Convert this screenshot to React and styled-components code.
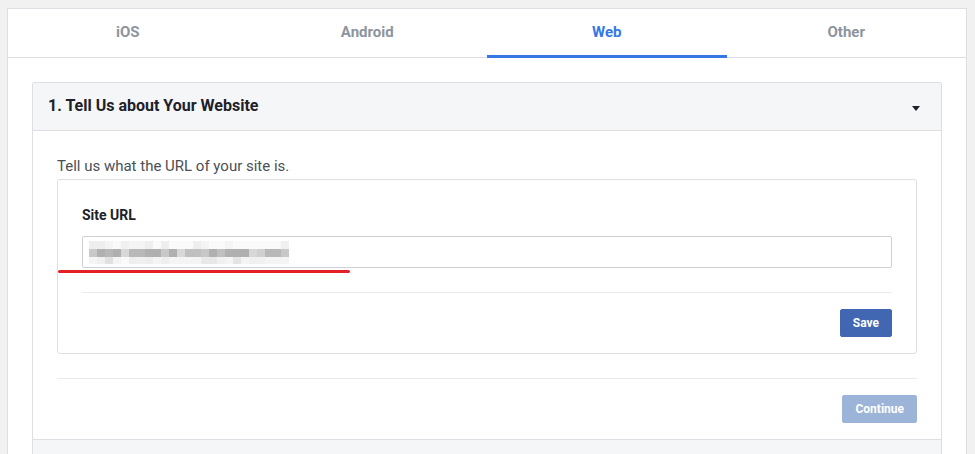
import React from "react";
import styled, { createGlobalStyle } from "styled-components";

const GlobalStyle = createGlobalStyle`
    html, body {
        margin: 0;
        padding: 0;
        background: #f1f1f1;
        font-family: Roboto, "Liberation Sans", Arial, sans-serif;
        overflow: hidden;
    }
    * {
        box-sizing: border-box;
    }
`;

const tabs = ["iOS", "Android", "Web", "Other"];

// pixelated (blurred) url inside the input, one value per 8px block
const midRow = [200, 176, 184, 176, 216, 184, 184, 176, 176, 200, 176, 216, 192, 192, 200, 176, 192, 176, 176, 176, 216, 208, 184, 184, 200];
const topRow = [238, 238, 244, 250, 240, 244, 244, 238, 250, 238, 250, 250, 250, 238, 244, 250, 250, 244, 250, 250, 250, 250, 250, 250, 240];
const lowRow = [244, 240, 224, 244, 250, 238, 240, 238, 244, 238, 244, 244, 244, 244, 232, 232, 240, 244, 228, 244, 240, 240, 244, 244, 244];

const gray = (v) => `rgb(${v},${v},${v})`;

const App = () => {
    return (
        <>
            <GlobalStyle />
            <Page>
                <Card>
                    <TabBar>
                        {tabs.map((tab) => (
                            <Tab key={tab} active={tab === "Web"}>
                                {tab}
                            </Tab>
                        ))}
                    </TabBar>
                    <CardBody>
                        <Panel>
                            <PanelHeader>
                                <PanelTitle>1. Tell Us about Your Website</PanelTitle>
                                <Caret />
                            </PanelHeader>
                            <PanelBody>
                                <Intro>Tell us what the URL of your site is.</Intro>
                                <FormBox>
                                    <FieldLabel>Site URL</FieldLabel>
                                    <UrlInput>
                                        <svg width="200" height="23" viewBox="0 0 200 23">
                                            {topRow.map((v, i) => (
                                                <rect key={`t${i}`} x={i * 8} y="0" width="8" height="8" fill={gray(v)} />
                                            ))}
                                            {midRow.map((v, i) => (
                                                <rect key={`m${i}`} x={i * 8} y="8" width="8" height="8" fill={gray(v)} />
                                            ))}
                                            {lowRow.map((v, i) => (
                                                <rect key={`l${i}`} x={i * 8} y="16" width="8" height="7" fill={gray(v)} />
                                            ))}
                                        </svg>
                                    </UrlInput>
                                    <RedMark />
                                    <Divider />
                                    <ButtonRow>
                                        <Button>Save</Button>
                                    </ButtonRow>
                                </FormBox>
                                <Divider />
                                <ButtonRow>
                                    <Button disabled>Continue</Button>
                                </ButtonRow>
                            </PanelBody>
                            <NextSection />
                        </Panel>
                    </CardBody>
                </Card>
            </Page>
        </>
    );
};

const Page = styled.div`
    padding: 8px 8px 0 7px;
    height: 454px;
`;

const Card = styled.div`
    background: #fff;
    border: 1px solid #dddfe2;
    border-bottom: none;
    height: 100%;
`;

const TabBar = styled.div`
    display: grid;
    grid-template-columns: repeat(4, 1fr);
    border-bottom: 1px solid #dddfe2;
    height: 49px;
`;

const Tab = styled.div`
    display: flex;
    align-items: center;
    justify-content: center;
    font-size: 15px;
    font-weight: 700;
    color: ${(p) => (p.active ? "#3578e5" : "#8d949e")};
    border-bottom: 3px solid ${(p) => (p.active ? "#3578e5" : "transparent")};
    margin-bottom: -1px;
`;

const CardBody = styled.div`
    padding: 24px 24px 0;
`;

const Panel = styled.div`
    border: 1px solid #dddfe2;
    border-bottom: none;
    border-radius: 3px 3px 0 0;
    overflow: hidden;
`;

const PanelHeader = styled.div`
    background: #f5f6f7;
    height: 48px;
    border-bottom: 1px solid #dddfe2;
    display: flex;
    align-items: center;
    justify-content: space-between;
    padding: 0 21px 0 15px;
`;

const PanelTitle = styled.div`
    font-size: 16px;
    font-weight: 700;
    color: #1d2129;
    margin-top: -2px;
`;

const Caret = styled.div`
    width: 0;
    height: 0;
    border-left: 4px solid transparent;
    border-right: 4px solid transparent;
    border-top: 5px solid #1d2129;
    margin-top: 4px;
`;

const PanelBody = styled.div`
    padding: 26px 24px 16px;
`;

const Intro = styled.div`
    font-size: 15px;
    color: #4b4f56;
    line-height: 18px;
    margin-bottom: 4px;
`;

const FormBox = styled.div`
    position: relative;
    border: 1px solid #dddfe2;
    border-radius: 3px;
    padding: 27px 24px 16px;
`;

const FieldLabel = styled.div`
    font-size: 14px;
    font-weight: 700;
    color: #1d2129;
    line-height: 16px;
    margin-bottom: 13px;
`;

const UrlInput = styled.div`
    height: 32px;
    border: 1px solid #ccd0d5;
    border-radius: 2px;
    padding: 4px 6px;
    display: flex;
    align-items: center;
`;

const RedMark = styled.div`
    position: absolute;
    left: 0;
    top: 90px;
    width: 292px;
    height: 3px;
    border-radius: 2px;
    background: #e42127;
`;

const Divider = styled.div`
    height: 1px;
    background: #e9ebee;
    margin: 24px 0 16px;
`;

const ButtonRow = styled.div`
    display: flex;
    justify-content: flex-end;
`;

const Button = styled.button`
    height: 28px;
    padding: 0 12px;
    border: 1px solid ${(p) => (p.disabled ? "#9cb4d8" : "#4267b2")};
    border-radius: 2px;
    background: ${(p) => (p.disabled ? "#9cb4d8" : "#4267b2")};
    color: #fff;
    font-family: Roboto, "Liberation Sans", Arial, sans-serif;
    font-size: 12px;
    font-weight: 700;
`;

const NextSection = styled.div`
    height: 40px;
    background: #f5f6f7;
    border-top: 1px solid #dddfe2;
`;

export default App;
